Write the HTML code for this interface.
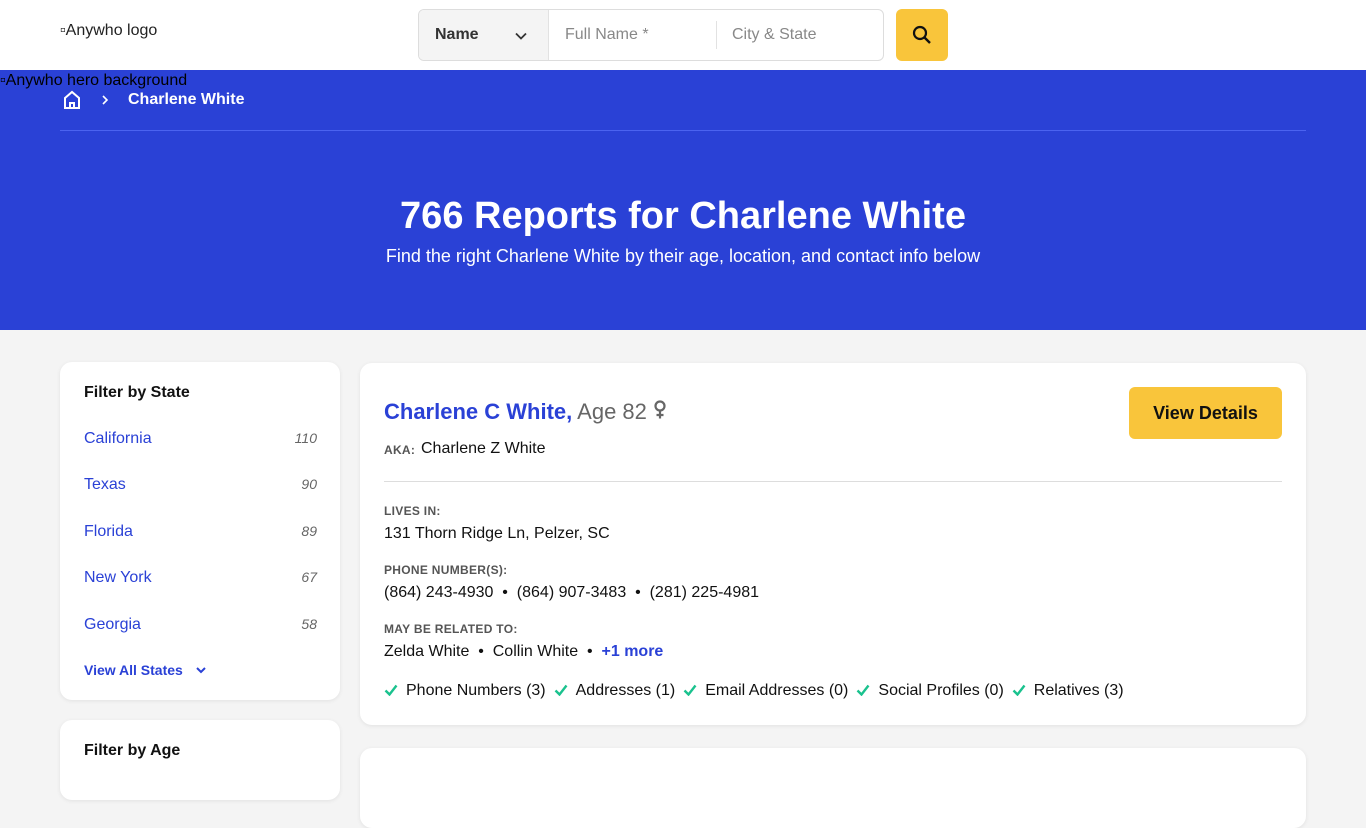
<!DOCTYPE html>
<html><head><meta charset="utf-8"><style>
*{box-sizing:border-box;margin:0;padding:0}
body{width:1366px;height:768px;overflow:hidden;font-family:"Liberation Sans",Arial,sans-serif;background:#f4f4f4;position:relative;color:#111}
.hdr{position:absolute;left:0;top:0;width:1366px;height:70px;background:#fff}
.logo{position:absolute;left:60px;top:22px;font-size:16px;color:#222}
.search{position:absolute;left:418px;top:9px;width:466px;height:52px;border:1px solid #ddd;border-radius:6px;background:#fff;overflow:hidden}
.sel{position:absolute;left:0;top:0;width:130px;height:50px;background:#f4f4f4;border-right:1px solid #e2e2e2}
.sel b{position:absolute;left:16px;top:16px;font-size:16px;color:#333}
.ph{position:absolute;top:16px;font-size:16px;color:#888}
.sbtn{position:absolute;left:896px;top:9px;width:52px;height:52px;border-radius:6px;background:#f9c53b}
.hero{position:absolute;left:0;top:70px;width:1366px;height:260px;background:#2a41d6;color:#fff}
.hero .alt{position:absolute;left:0;top:2px;font-size:16px;color:#000}
.bc{position:absolute;left:128px;top:21px;font-weight:bold;font-size:16px}
.line{position:absolute;left:60px;top:60px;width:1246px;height:1px;background:#4b63f0}
h1{position:absolute;left:0;width:1366px;text-align:center;top:125px;font-size:38px}
.sub{position:absolute;left:0;width:1366px;text-align:center;top:176px;font-size:18px}
.card{position:absolute;background:#fff;border-radius:12px;box-shadow:0 1px 4px rgba(0,0,0,.08)}
.ft{font-weight:bold;font-size:16px;position:absolute;left:24px}
.st{position:absolute;left:24px;font-size:16px;color:#2a41d6;width:233px}
.st i{position:absolute;right:0;font-size:14px;color:#666}
.lbl{font-size:12px;font-weight:bold;color:#555;letter-spacing:.3px;position:absolute;left:24px}
.val{font-size:16px;position:absolute;left:24px}
.ck{display:inline-block;vertical-align:-1px;margin:0 8px 0 8px}
.ck.f{margin-left:2px}
</style></head><body>
<div class="hdr">
<div class="logo">▫Anywho logo</div>
<div class="search"><div class="sel"><b>Name</b>
<svg style="position:absolute;left:95px;top:19px" width="14" height="14" viewBox="0 0 14 14"><path d="M2 4.5l5 5 5-5" stroke="#333" stroke-width="1.8" fill="none"/></svg></div>
<span class="ph" style="left:146px">Full Name *</span>
<div style="position:absolute;left:297px;top:11px;width:1px;height:28px;background:#e2e2e2"></div>
<span class="ph" style="left:313px">City &amp; State</span></div>
<div class="sbtn"><svg style="position:absolute;left:16px;top:16px" width="20" height="20" viewBox="0 0 20 20"><circle cx="8" cy="8" r="6" stroke="#111" stroke-width="2.2" fill="none"/><path d="M12.5 12.5l5.5 5.5" stroke="#111" stroke-width="2.4"/></svg></div>
</div>
<div class="hero">
<div class="alt">▫Anywho hero background</div>
<svg style="position:absolute;left:63px;top:20px" width="18" height="20" viewBox="0 0 18 20"><path d="M2 8L9 2l7 6v10H2z M7 18v-5h4v5" stroke="#fff" stroke-width="2" fill="none"/></svg>
<svg style="position:absolute;left:100px;top:24px" width="10" height="12" viewBox="0 0 10 12"><path d="M3 2l4 4-4 4" stroke="#fff" stroke-width="1.6" fill="none"/></svg>
<div class="bc">Charlene White</div>
<div class="line"></div>
<h1>766 Reports for Charlene White</h1>
<div class="sub">Find the right Charlene White by their age, location, and contact info below</div>
</div>
<div class="card" style="left:60px;top:362px;width:280px;height:338px">
<div class="ft" style="top:22px">Filter by State</div>
<div class="st" style="top:68px">California<i>110</i></div>
<div class="st" style="top:114px">Texas<i>90</i></div>
<div class="st" style="top:161px">Florida<i>89</i></div>
<div class="st" style="top:207px">New York<i>67</i></div>
<div class="st" style="top:254px">Georgia<i>58</i></div>
<div class="st" style="top:300px;font-size:14px;font-weight:bold">View All States <svg style="margin-left:8px" width="12" height="10" viewBox="0 0 12 10"><path d="M2 3l4 4 4-4" stroke="#2a41d6" stroke-width="2" fill="none"/></svg></div>
</div>
<div class="card" style="left:60px;top:720px;width:280px;height:80px"><div class="ft" style="top:22px">Filter by Age</div></div>
<div class="card" style="left:360px;top:363px;width:946px;height:362px">
<div style="position:absolute;left:24px;top:36px;font-size:22px"><b style="color:#2a41d6">Charlene C White,</b> <span style="color:#666">Age 82</span>
<svg style="vertical-align:-1px" width="14" height="20" viewBox="0 0 14 20"><circle cx="7" cy="6" r="4.5" stroke="#666" stroke-width="2.2" fill="none"/><path d="M7 10.5v8M3.5 15h7" stroke="#666" stroke-width="2.2"/></svg></div>
<div style="position:absolute;left:769px;top:24px;width:153px;height:52px;background:#f9c53b;border-radius:6px;text-align:center;line-height:52px;font-weight:bold;font-size:18px">View Details</div>
<div class="lbl" style="top:80px">AKA:</div><div class="val" style="left:61px;top:77px">Charlene Z White</div>
<div style="position:absolute;left:24px;top:118px;width:898px;height:1px;background:#ddd"></div>
<div class="lbl" style="top:141px">LIVES IN:</div><div class="val" style="top:162px">131 Thorn Ridge Ln, Pelzer, SC</div>
<div class="lbl" style="top:200px">PHONE NUMBER(S):</div><div class="val" style="top:221px">(864) 243-4930 &nbsp;•&nbsp; (864) 907-3483 &nbsp;•&nbsp; (281) 225-4981</div>
<div class="lbl" style="top:259px">MAY BE RELATED TO:</div><div class="val" style="top:280px">Zelda White &nbsp;•&nbsp; Collin White &nbsp;•&nbsp; <b style="color:#2a41d6">+1 more</b></div>
<div class="val" style="top:319px;left:22px"><svg class="ck f" width="14" height="12" viewBox="0 0 14 12"><path d="M1.5 6.5l4 4 7-9" stroke="#1ac28e" stroke-width="2.4" fill="none"/></svg>Phone Numbers (3)<svg class="ck" width="14" height="12" viewBox="0 0 14 12"><path d="M1.5 6.5l4 4 7-9" stroke="#1ac28e" stroke-width="2.4" fill="none"/></svg>Addresses (1)<svg class="ck" width="14" height="12" viewBox="0 0 14 12"><path d="M1.5 6.5l4 4 7-9" stroke="#1ac28e" stroke-width="2.4" fill="none"/></svg>Email Addresses (0)<svg class="ck" width="14" height="12" viewBox="0 0 14 12"><path d="M1.5 6.5l4 4 7-9" stroke="#1ac28e" stroke-width="2.4" fill="none"/></svg>Social Profiles (0)<svg class="ck" width="14" height="12" viewBox="0 0 14 12"><path d="M1.5 6.5l4 4 7-9" stroke="#1ac28e" stroke-width="2.4" fill="none"/></svg>Relatives (3)</div>
</div>
<div class="card" style="left:360px;top:748px;width:946px;height:80px"></div>
</body></html>
